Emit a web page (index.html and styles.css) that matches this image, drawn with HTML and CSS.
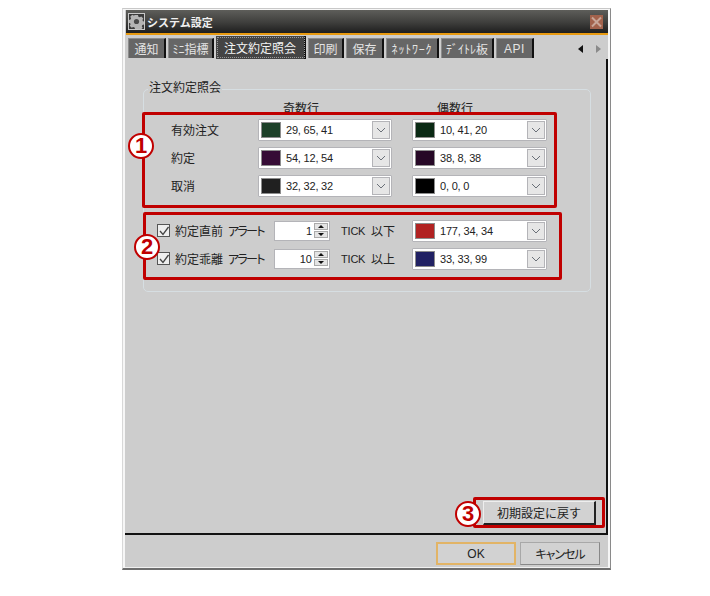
FILE: index.html
```html
<!DOCTYPE html>
<html lang="ja">
<head>
<meta charset="utf-8">
<title>システム設定</title>
<link rel="stylesheet" href="styles.css">
</head>
<body>
<div class="window">
  <header class="titlebar">
    <span class="app-icon">
      <svg width="17" height="17" viewBox="0 0 17 17"><rect x="0.5" y="0.5" width="16" height="16" fill="#3a3a3a" stroke="#c8c8c8"/><path fill="#b4b4b4" d="M7 2h3l.4 1.7 1.4.6 1.5-.9 2 2-.9 1.5.6 1.4 1 .2v3l-1.6.4-.6 1.4.9 1.5-2 2-1.5-.9-1.4.6L10 16H7l-.4-1.5-1.4-.6-1.5.9-2-2 .9-1.5-.6-1.4L1 10V7l1.5-.4.6-1.4-.9-1.5 2-2 1.5.9 1.4-.6z"/><circle cx="8.5" cy="8.5" r="2.6" fill="#4a4a4a"/></svg>
    </span>
    <span class="title-text">システム設定</span>
    <span class="close-btn">
      <svg width="13" height="14" viewBox="0 0 13 14"><path d="M2 2.5l9 9M11 2.5l-9 9" stroke="#c8a698" stroke-width="2" fill="none"/></svg>
    </span>
  </header>
  <nav class="tabs">
    <span class="tab tab-w38">通知</span>
    <span class="tab tab-w46">ﾐﾆ指標</span>
    <span class="tab tab-active">注文約定照会</span>
    <span class="tab tab-w36">印刷</span>
    <span class="tab tab-w38">保存</span>
    <span class="tab tab-w52">ﾈｯﾄﾜｰｸ</span>
    <span class="tab tab-w53">ﾃﾞｲﾄﾚ板</span>
    <span class="tab tab-w38 tab-latin">API</span>
    <span class="tab-arrows">
      <svg width="24" height="8" viewBox="0 0 24 8"><path d="M5 0v8L0 4z" fill="#111"/><path d="M18 0v8l5-4z" fill="#8a8a8a"/></svg>
    </span>
  </nav>
  <main class="panel">
    <fieldset class="group">
      <legend class="group-title">注文約定照会</legend>
      <div class="color-heads">
        <span></span>
        <span class="head">奇数行</span>
        <span class="head">偶数行</span>
      </div>
      <div class="color-grid">
        <span class="label">有効注文</span>
        <div class="combo"><i class="swatch sw-a"></i><span class="combo-text">29, 65, 41</span><span class="combo-btn"><svg width="10" height="6" viewBox="0 0 10 6"><path d="M1 1l4 4 4-4" fill="none" stroke="#6a7078"/></svg></span></div>
        <div class="combo"><i class="swatch sw-b"></i><span class="combo-text">10, 41, 20</span><span class="combo-btn"><svg width="10" height="6" viewBox="0 0 10 6"><path d="M1 1l4 4 4-4" fill="none" stroke="#6a7078"/></svg></span></div>
        <span class="label">約定</span>
        <div class="combo"><i class="swatch sw-c"></i><span class="combo-text">54, 12, 54</span><span class="combo-btn"><svg width="10" height="6" viewBox="0 0 10 6"><path d="M1 1l4 4 4-4" fill="none" stroke="#6a7078"/></svg></span></div>
        <div class="combo"><i class="swatch sw-d"></i><span class="combo-text">38, 8, 38</span><span class="combo-btn"><svg width="10" height="6" viewBox="0 0 10 6"><path d="M1 1l4 4 4-4" fill="none" stroke="#6a7078"/></svg></span></div>
        <span class="label">取消</span>
        <div class="combo"><i class="swatch sw-e"></i><span class="combo-text">32, 32, 32</span><span class="combo-btn"><svg width="10" height="6" viewBox="0 0 10 6"><path d="M1 1l4 4 4-4" fill="none" stroke="#6a7078"/></svg></span></div>
        <div class="combo"><i class="swatch sw-f"></i><span class="combo-text">0, 0, 0</span><span class="combo-btn"><svg width="10" height="6" viewBox="0 0 10 6"><path d="M1 1l4 4 4-4" fill="none" stroke="#6a7078"/></svg></span></div>
      </div>
      <div class="alerts">
        <div class="alert-row">
          <span class="check"><svg width="10" height="10" viewBox="0 0 10 10"><path d="M1 5l3 3.5L9.500 1" fill="none" stroke="#444" stroke-width="1.300"/></svg></span>
          <span class="alert-name">約定直前</span>
          <span class="alert-word">アラート</span>
          <div class="spin"><span class="spin-value">1</span><span class="spin-btns"><svg width="14" height="15" viewBox="0 0 14 15"><rect x="0.500" y="0.500" width="13" height="6" fill="#e4e4e4" stroke="#aaa"/><rect x="0.500" y="8.500" width="13" height="6" fill="#e4e4e4" stroke="#aaa"/><path d="M7 2l3 3H4z" fill="#111"/><path d="M7 13l3-3H4z" fill="#111"/></svg></span></div>
          <span class="tick">TICK</span>
          <span class="tick-dir">以下</span>
          <div class="combo"><i class="swatch sw-g"></i><span class="combo-text">177, 34, 34</span><span class="combo-btn"><svg width="10" height="6" viewBox="0 0 10 6"><path d="M1 1l4 4 4-4" fill="none" stroke="#6a7078"/></svg></span></div>
        </div>
        <div class="alert-row">
          <span class="check"><svg width="10" height="10" viewBox="0 0 10 10"><path d="M1 5l3 3.5L9.500 1" fill="none" stroke="#444" stroke-width="1.300"/></svg></span>
          <span class="alert-name">約定乖離</span>
          <span class="alert-word">アラート</span>
          <div class="spin"><span class="spin-value">10</span><span class="spin-btns"><svg width="14" height="15" viewBox="0 0 14 15"><rect x="0.500" y="0.500" width="13" height="6" fill="#e4e4e4" stroke="#aaa"/><rect x="0.500" y="8.500" width="13" height="6" fill="#e4e4e4" stroke="#aaa"/><path d="M7 2l3 3H4z" fill="#111"/><path d="M7 13l3-3H4z" fill="#111"/></svg></span></div>
          <span class="tick">TICK</span>
          <span class="tick-dir">以上</span>
          <div class="combo"><i class="swatch sw-h"></i><span class="combo-text">33, 33, 99</span><span class="combo-btn"><svg width="10" height="6" viewBox="0 0 10 6"><path d="M1 1l4 4 4-4" fill="none" stroke="#6a7078"/></svg></span></div>
        </div>
      </div>
    </fieldset>
    <button class="reset-btn" type="button">初期設定に戻す</button>
  </main>
  <footer class="footer">
    <button class="btn btn-ok" type="button">OK</button>
    <button class="btn btn-cancel" type="button">キャンセル</button>
  </footer>
  <div class="mark mark-1"></div>
  <div class="mark mark-2"></div>
  <div class="mark mark-3"></div>
  <span class="num num-1">1</span>
  <span class="num num-2">2</span>
  <span class="num num-3">3</span>
</div>
</body>
</html>
```

FILE: styles.css
```css
* { box-sizing: border-box; }
html, body { margin: 0; padding: 0; background: #fff; }
body {
  font: 12px/16px "Noto Sans CJK JP", "Liberation Sans", sans-serif;
  color: #222;
  padding: 8px 0 0 122px;
}
.window {
  position: relative;
  width: 489px;
  height: 562px;
  display: flex;
  flex-direction: column;
  background: #cdcdcd;
  border-style: solid;
  border-color: #c8c8c8 #8a8a8a #6e6e6e #d8d8d8;
  border-width: 1px 1px 2px 1px;
  box-shadow: inset 2px 0 0 #f6f6f6, inset -2px 0 0 #f6f6f6, inset 0 1px 0 #f6f6f6, inset 0 -1px 0 #f0f0f0;
  padding: 1px 2px 0 2px;
}
.titlebar {
  height: 23px;
  margin-left: 1px;
  flex: none;
  display: flex;
  align-items: center;
  padding: 0 5px 0 2px;
  background: linear-gradient(#5e5e5a, #3e3e3c 55%, #1e1e1e);
  border-bottom: 2px solid #e89a10;
  box-sizing: content-box;
  color: #f0f0f0;
}
.app-icon { display: flex; width: 17px; height: 17px; }
.title-text { margin-left: 2px; font-weight: 700; font-size: 11px; }
.close-btn {
  margin-left: auto;
  display: flex;
  width: 13px;
  height: 14px;
  background: #a2624c;
}
.tabs {
  flex: none;
  height: 24px;
  display: flex;
  align-items: flex-end;
  gap: 2px;
  padding: 0 0 1px 3px;
}
.tab {
  height: 20px;
  margin-bottom: 0;
  display: flex;
  align-items: center;
  justify-content: center;
  background: #666;
  color: #e4e4e4;
  border-top: 1px solid #8c8c8c;
  border-left: 1px solid #8c8c8c;
  border-right: 2px solid #111;
}
.tab-w36 { width: 36px; }
.tab-w38 { width: 38px; }
.tab-w46 { width: 46px; }
.tab-w52 { width: 53px; letter-spacing: 0.8px; }
.tab-w53 { width: 53px; }
.tab-latin { font-family: "Liberation Sans", sans-serif; letter-spacing: 0.5px; }
.tab-active {
  width: 90px;
  height: 23px;
  margin-bottom: -1px;
  background: #444;
  color: #f4f4f4;
  outline: 1px dotted #999;
  outline-offset: -2px;
  border: 0;
  border-right: 2px solid #111;
}
.tab-arrows { margin: 0 0 5px auto; padding-right: 6px; display: flex; }
.panel {
  flex: 1;
  display: flex;
  flex-direction: column;
  background: #cdcdcd;
  border-right: 2px solid #111;
  border-bottom: 2px solid #111;
  padding-top: 22px;
}
.group {
  margin: 0 15px 0 18px;
  padding: 4px 0 0 0;
  height: 211px;
  border: 1px solid #d6dee2;
  border-radius: 5px;
  min-width: 0;
}
.group-title { margin-left: 4px; padding: 0 1px; color: #222; line-height: 16px; position: relative; top: -2px; }
.color-heads, .color-grid {
  display: grid;
  grid-template-columns: 67px 134px 135px;
  column-gap: 20px;
  padding-left: 27px;
}
.color-heads { height: 14px; line-height: 14px; margin-bottom: 4px; }
.color-grid { grid-auto-rows: 22px; row-gap: 6px; }
.head { padding-left: 25px; }
.label { align-self: center; }
.combo {
  display: flex;
  align-items: center;
  height: 22px;
  background: #fff;
  border: 1px solid #b4b4b8;
  border-radius: 1px;
  padding: 0 1px 0 2px;
}
.swatch {
  flex: none;
  width: 20px;
  height: 16px;
  border: 1px solid #8c8c8c;
}
.sw-a { background: #1d4129; }
.sw-b { background: #0a2914; }
.sw-c { background: #360c36; }
.sw-d { background: #260826; }
.sw-e { background: #202020; }
.sw-f { background: #000; }
.sw-g { background: #b12222; }
.sw-h { background: #212163; }
.combo-text {
  margin-left: 5px;
  font: 11px/16px "Liberation Sans", sans-serif;
  letter-spacing: -0.2px;
  color: #222;
}
.combo-btn {
  margin-left: auto;
  flex: none;
  width: 18px;
  height: 18px;
  display: flex;
  align-items: center;
  justify-content: center;
  background: #e6e6e6;
  border: 1px solid #b4b4b8;
}
.alerts {
  margin-top: 23px;
  display: flex;
  flex-direction: column;
  gap: 7px;
  padding-left: 13px;
}
.alert-row { display: flex; align-items: center; height: 21px; }
.check {
  flex: none;
  width: 13px;
  height: 13px;
  background: #eee;
  border: 1px solid #555;
  display: flex;
  align-items: center;
  justify-content: center;
}
.alert-name { width: 53px; margin-left: 5px; flex: none; font-size: 12px; }
.alert-word { width: 46px; flex: none; font-feature-settings: "palt"; letter-spacing: -1.700px; }
.spin {
  flex: none;
  width: 56px;
  height: 20px;
  background: #fff;
  border: 1px solid #b4b4b8;
  display: flex;
  align-items: center;
  justify-content: flex-end;
  padding-right: 1px;
}
.spin-value { font: 11px/16px "Liberation Sans", sans-serif; margin-right: 2px; }
.spin-btns { display: flex; }
.tick {
  flex: none;
  width: 30px;
  margin-left: 11px;
  font: 11px/16px "Liberation Sans", sans-serif;
  letter-spacing: -0.2px;
}
.tick-dir { flex: none; width: 41px; }
.alert-row .combo { width: 135px; flex: none; }
.reset-btn {
  align-self: flex-end;
  margin: auto 10px 8px 0;
  width: 113px;
  height: 24px;
  padding: 0;
  font: inherit;
  color: #222;
  background: #d2d2d2;
  border-style: solid;
  border-color: #eee #222 #222 #eee;
  border-width: 1px 2px 2px 1px;
}
.footer {
  flex: none;
  height: 33px;
  display: flex;
  justify-content: flex-end;
  gap: 4px;
  padding: 7px 8px 0 0;
}
.btn {
  width: 80px;
  height: 23px;
  padding: 0;
  font: inherit;
  color: #222;
  background: #d2d2d2;
  border: 1px solid #a8a8a8;
  border-right-color: #888;
  border-bottom-color: #888;
}
.btn-cancel { font-feature-settings: "palt"; letter-spacing: -1px; }
.btn-ok { border: 2px solid #e2b466; font-family: "Liberation Sans", sans-serif; }
.mark {
  position: absolute;
  border: 3px solid #c00000;
  border-radius: 2px;
  pointer-events: none;
}
.mark-1 { left: 19px; top: 103px; width: 415px; height: 96px; }
.mark-2 { left: 20px; top: 203px; width: 419px; height: 68px; }
.mark-3 { left: 350px; top: 488px; width: 132px; height: 31px; }
.num {
  position: absolute;
  width: 26px;
  height: 26px;
  border-radius: 50%;
  background: #fff;
  border: 2px solid #c00000;
  color: #c00000;
  font: 700 22px/22px "Liberation Sans", sans-serif;
  text-align: center;
}
.num-1 { left: 5px; top: 124px; }
.num-2 { left: 11px; top: 225px; }
.num-3 { left: 332px; top: 492px; }
```
